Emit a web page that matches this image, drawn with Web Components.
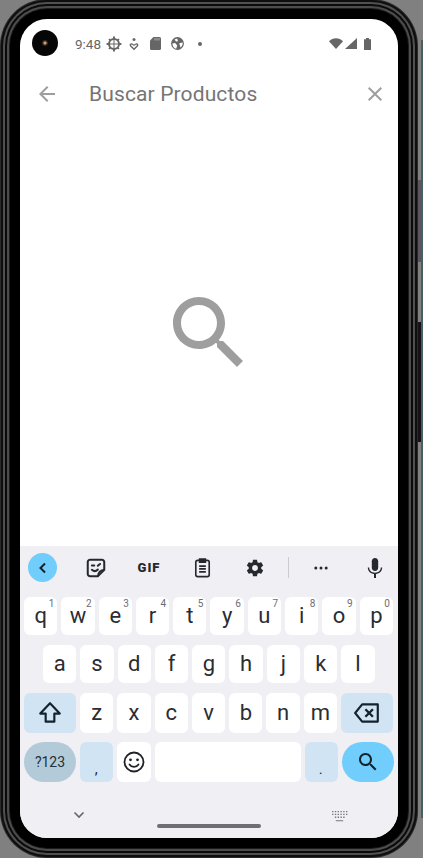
<!DOCTYPE html>
<html lang="es">
<head>
<meta charset="utf-8">
<title>Buscar Productos</title>
<style>
html,body{margin:0;padding:0;background:#808080;}
body{width:423px;height:858px;overflow:hidden;font-family:Roboto,"Liberation Sans",sans-serif;}
</style>
</head>
<body>
<device-frame>
  <status-bar></status-bar>
  <app-bar title="Buscar Productos"></app-bar>
  <search-empty></search-empty>
  <g-keyboard></g-keyboard>
</device-frame>
<script>
const tpl = (html) => { const t = document.createElement('template'); t.innerHTML = html; return t; };
class Base extends HTMLElement {
  connectedCallback() {
    if (this.shadowRoot) return;
    this.attachShadow({mode:'open'}).appendChild(this.constructor.template.content.cloneNode(true));
    this.init && this.init();
  }
}
class DeviceFrame extends Base {
  static template = tpl(`<style>
    :host{display:block;width:423px;height:858px;box-sizing:border-box;padding:19px 25px 20px 20px;position:relative;overflow:hidden;}
    .screen{width:378px;height:819px;border-radius:27px;background:#fff;overflow:hidden;display:flex;flex-direction:column;position:relative;}
    .rings{position:absolute;left:20px;top:19px;width:378px;height:819px;border-radius:27px;
      box-shadow:0 0 0 10px #000,0 0 0 11px #1c1c1c,0 0 0 13px #4c4c4c,0 0 0 15px #0a0a0a,0 0 0 17px #505050,0 0 0 19px #0e0e0e,0 0 0 20px #2a2a2a;}
    .btn{position:absolute;width:3px;right:2px;}
    .b1{top:180px;height:82px;background:#5b5560;}
    .b2{top:322px;height:120px;background:#17121a;}
    .edge{position:absolute;right:0;top:40px;bottom:40px;width:2px;background:#46605f;}
    .cam{position:absolute;left:32px;top:30px;width:26px;height:26px;border-radius:50%;background:#060606;display:flex;align-items:center;justify-content:center;}
    .cam i{width:6px;height:6px;border-radius:50%;background:radial-gradient(circle,#c9a878 0 20%,#4a3826 45%,#1a1612 80%);}
  </style>
  <div class="rings"></div><div class="edge"></div><div class="btn b1"></div><div class="btn b2"></div>
  <div class="screen"><slot></slot></div>
  <div class="cam"><i></i></div>`);
}
class StatusBar extends Base {
  static template = tpl(`<style>
    :host{display:flex;align-items:center;height:47px;flex:none;padding:2px 27px 0 55px;box-sizing:border-box;color:#666;font:13.5px Roboto,sans-serif;}
    svg{display:block;fill:#666;flex:none;}
    .time{width:26px;margin-right:5px;white-space:nowrap;}
    .sp{flex:1;}
  </style>
  <span class="time">9:48</span>
  <svg width="16" height="16" viewBox="0 0 16 16" style="margin-right:7px"><circle cx="8" cy="8" r="5" fill="none" stroke="#666" stroke-width="2"/><path d="M4 8h8M8 4v8" stroke="#666" stroke-width="1"/><path d="M7 .6h2v2H7zM7 13.400h2v2H7zM.6 7h2v2h-2zM13.400 7h2v2h-2zM2.400 3.600l1.200-1.200 1.400 1.400-1.200 1.200zM11 3.800l1.400-1.400 1.200 1.200-1.400 1.400zM2.400 12.400l1.400-1.400 1.200 1.200-1.400 1.400zM10.900 12.100l1.200-1.200 1.400 1.400-1.200 1.200z"/></svg>
  <svg width="10" height="14" viewBox="0 0 10 14" style="margin-right:11px"><circle cx="5" cy="2.400" r="1.500"/><path d="M5 13.200 1 9.200C-.2 7.800 1.400 5.600 3.200 6.400L5 7.600l1.800-1.200C8.600 5.600 10.200 7.800 9 9.200ZM5 11.200 7.800 8.400c.4-.6-.2-1-.7-.8L5 9 2.900 7.600c-.5-.2-1.100.2-.7.8Z" fill-rule="evenodd"/></svg>
  <svg width="11" height="13" viewBox="0 0 11 13" style="margin-right:10px"><path d="M3.500 0H9.500A1.500 1.500 0 0 1 11 1.500V11.500A1.500 1.500 0 0 1 9.500 13H1.500A1.500 1.500 0 0 1 0 11.500V3.500Z"/><path d="M5 1v2.500M7 1v2.500M9 1v2.500" stroke="#fff" stroke-width=".5"/></svg>
  <svg width="13" height="13" viewBox="0 0 13 13" style="margin-right:14px"><circle cx="6.500" cy="6.500" r="6.400"/><path d="M6.200 1.500 3.500 2.500 5 4.600l2-.4ZM1.400 6.400l2.800-.4 2 2.500-1 3.200C3 11.300 1.500 9.300 1.400 6.400ZM8.200 6.200l3.500-.6c.2 2-.6 3.800-2.200 5Z" fill="#fff"/></svg>
  <svg width="4" height="4" viewBox="0 0 4 4"><circle cx="2" cy="2" r="2"/></svg>
  <span class="sp"></span>
  <svg width="14" height="11" viewBox="0 0 14 11" style="margin-right:2px"><path d="M0 3.200C3.800-.9 10.200-.9 14 3.200L7 11Z"/></svg>
  <svg width="12" height="11" viewBox="0 0 12 11" style="margin-right:7px"><path d="M12 0v11H0Z"/></svg>
  <svg width="7" height="12" viewBox="0 0 7 12"><path d="M2 0h3v1.200h2V12H0V1.200h2Z"/></svg>`);
}
class AppBar extends Base {
  static template = tpl(`<style>
    :host{display:flex;align-items:center;height:54px;flex:none;box-sizing:border-box;padding:2px 11px 0 15px;color:#757575;}
    svg{display:block;fill:#9e9e9e;flex:none;}
    .t{flex:1;margin-left:30px;font:21px Roboto,sans-serif;letter-spacing:.13px;color:#757575;white-space:nowrap;}
  </style>
  <svg width="24" height="24" viewBox="0 0 24 24"><path d="M20 11H7.830l5.590-5.590L12 4l-8 8 8 8 1.410-1.410L7.830 13H20v-2z"/></svg>
  <span class="t"></span>
  <svg width="24" height="24" viewBox="0 0 24 24"><path d="M19 6.410 17.590 5 12 10.590 6.410 5 5 6.410 10.590 12 5 17.590 6.410 19 12 13.410 17.590 19 19 17.590 13.410 12z"/></svg>`);
  init(){ this.shadowRoot.querySelector('.t').textContent = this.getAttribute('title'); this.removeAttribute('title'); }
}
class SearchEmpty extends Base {
  static template = tpl(`<style>
    :host{display:flex;flex:1;align-items:center;justify-content:center;min-height:0;}
    svg{display:block;fill:#9e9e9e;}
  </style>
  <svg width="96" height="96" viewBox="0 0 24 24"><path d="M15.500 14h-.79l-.28-.27C15.410 12.590 16 11.110 16 9.500 16 5.910 13.090 3 9.500 3S3 5.910 3 9.500 5.910 16 9.500 16c1.610 0 3.090-.59 4.230-1.570l.27.28v.79l5 4.990L20.490 19l-4.990-5zm-6 0C7.010 14 5 11.990 5 9.500S7.010 5 9.500 5 14 7.010 14 9.500 11.990 14 9.500 14z"/></svg>`);
}
class KbKey extends Base {
  static template = tpl(`<style>
    :host{display:flex;align-items:center;justify-content:center;position:relative;flex:none;width:33.3px;height:100%;box-sizing:border-box;padding-bottom:1px;border-radius:6px;background:#fff;color:#2a2d31;font:22px Roboto,sans-serif;line-height:1;}
    :host([wide]){width:52px;}
    :host([fill]){flex:1;width:auto;}
    :host([tone=light]){background:#d1e4f4;}
    :host([tone=mid]){background:#b3cbd8;border-radius:20px / 20px;font-size:14px;color:#22303a;}
    :host([tone=accent]){background:#70cdfc;border-radius:20px / 20px;}
    :host([punct]){font-size:15px;padding:14px 1px 0 0;color:#22303a;}
    sup{position:absolute;top:2px;right:3px;font:10px Roboto,sans-serif;color:#6a6e74;line-height:1;margin:0;}
  </style><slot></slot><sup></sup>`);
  init(){ const h=this.getAttribute('hint'); if(h) this.shadowRoot.querySelector('sup').textContent=h; }
}
const I = {
 sticker:`<svg width="22" height="22" viewBox="0 0 24 24" fill="none" stroke="#25292d" stroke-width="2.200"><path d="M5.500 3h13A2.500 2.500 0 0 1 21 5.500V14l-7 7H5.500A2.500 2.500 0 0 1 3 18.500v-13A2.500 2.500 0 0 1 5.500 3Z"/><path d="M14 21c0-4 3-7 7-7" stroke-width="1.800"/><path d="M7.500 9.200h2.600M14 9.600l2.400-2M7.500 14c2.400 2 4.500 1.800 6.500-.4" stroke-linecap="round"/></svg>`,
 clip:`<svg width="23" height="23" viewBox="0 0 24 24" fill="none" stroke="#25292d" stroke-width="1.700"><rect x="5" y="4.500" width="14" height="17" rx="2"/><path d="M9 3.300h6v3.200H9z" fill="#25292d"/><path d="M8.500 10.500h7M8.500 13.500h7M8.500 16.500h7"/></svg>`,
 gear:`<svg width="20" height="20" viewBox="0 0 24 24" fill="#25292d"><path d="M19.430 12.980c.04-.32.07-.64.07-.98s-.03-.66-.07-.98l2.110-1.650c.19-.15.24-.42.12-.64l-2-3.460c-.12-.22-.39-.3-.61-.22l-2.490 1c-.52-.4-1.080-.73-1.690-.98l-.38-2.650C14.460 2.180 14.250 2 14 2h-4c-.25 0-.46.18-.49.420l-.38 2.650c-.61.25-1.170.59-1.690.98l-2.490-1c-.23-.09-.49 0-.61.220l-2 3.460c-.13.220-.07.490.12.640l2.110 1.650c-.04.320-.07.650-.07.980s.03.660.07.980l-2.110 1.650c-.19.150-.24.420-.12.640l2 3.460c.12.220.39.300.61.220l2.490-1c.52.400 1.080.730 1.690.980l.38 2.650c.03.240.24.420.49.420h4c.25 0 .46-.18.49-.42l.38-2.650c.61-.25 1.170-.59 1.690-.98l2.490 1c.23.090.49 0 .61-.22l2-3.460c.12-.22.07-.49-.12-.64l-2.110-1.650zM12 15.500c-1.930 0-3.500-1.570-3.500-3.500s1.570-3.500 3.500-3.500 3.500 1.570 3.500 3.500-1.570 3.500-3.500 3.500z"/></svg>`,
 dots:`<svg width="24" height="24" viewBox="0 0 24 24" fill="#25292d"><circle cx="6.800" cy="12" r="1.500"/><circle cx="12" cy="12" r="1.500"/><circle cx="17.200" cy="12" r="1.500"/></svg>`,
 mic:`<svg width="24" height="24" viewBox="0 0 24 24" fill="#25292d"><path d="M12 15c1.900 0 3.200-1.500 3.200-3.300V5.300C15.200 3.500 13.900 2 12 2S8.800 3.500 8.800 5.300v6.400C8.800 13.500 10.100 15 12 15z"/><path d="M17.800 11.600c0 3.200-2.500 5.200-5.800 5.200s-5.800-2-5.800-5.200H4.800c0 3.600 2.600 6 6.200 6.500V22h2v-3.900c3.600-.5 6.200-2.900 6.200-6.500z"/></svg>`,
 shift:`<svg width="26" height="26" viewBox="0 0 24 24" fill="none" stroke="#14222c" stroke-width="2" stroke-linejoin="round"><path d="M12 3 3 12.500h5V20h8v-7.500h5Z"/></svg>`,
 back:`<svg width="28" height="24" viewBox="0 0 26 22" fill="none" stroke="#14222c" stroke-width="2" stroke-linejoin="round"><path d="M8.500 3H23v16H8.500L2 11Z"/><path d="M11.500 7.500l7 7M18.500 7.500l-7 7" stroke-width="2.200"/></svg>`,
 emoji:`<svg width="24" height="24" viewBox="0 0 24 24" fill="none" stroke="#1f2227" stroke-width="1.800"><circle cx="12" cy="12" r="9.500"/><circle cx="8.500" cy="9.800" r="1.400" fill="#1f2227" stroke="none"/><circle cx="15.500" cy="9.800" r="1.400" fill="#1f2227" stroke="none"/><path d="M7.500 14.500c2.200 3.200 6.800 3.200 9 0" stroke-linecap="round"/></svg>`,
 search:`<svg width="24" height="24" viewBox="0 0 24 24" fill="#14222c"><path d="M15.500 14h-.79l-.28-.27C15.410 12.590 16 11.110 16 9.500 16 5.910 13.090 3 9.500 3S3 5.910 3 9.500 5.910 16 9.500 16c1.610 0 3.090-.59 4.230-1.570l.27.28v.79l5 4.990L20.490 19l-4.990-5zm-6 0C7.010 14 5 11.990 5 9.500S7.010 5 9.500 5 14 7.010 14 9.500 11.990 14 9.500 14z"/></svg>`
};
class KbToolbar extends Base {
  static template = tpl(`<style>
    :host{display:flex;align-items:center;height:43px;margin-bottom:8px;flex:none;box-sizing:border-box;padding:0 0 0 8px;}
    .c{width:29px;height:29px;border-radius:50%;background:#70cdfc;display:flex;align-items:center;justify-content:center;flex:none;}
    .i{width:24px;height:24px;display:flex;align-items:center;justify-content:center;flex:none;color:#25292d;}
    .g{font:900 13px Roboto,sans-serif;letter-spacing:1px;}
    .d{width:1px;height:21px;background:#c9cbd0;flex:none;margin:0 20px 0 21px;}
    .m29{margin-left:29px}.m27{margin-left:27px}.m30{margin-left:30px}
  </style>
  <div class="c"><svg width="14" height="14" viewBox="0 0 14 14" fill="none" stroke="#14222c" stroke-width="2"><path d="M9 2.500 4.500 7 9 11.500"/></svg></div>
  <div class="i m27">${I.sticker}</div>
  <div class="i m29 g">GIF</div>
  <div class="i m29">${I.clip}</div>
  <div class="i m29">${I.gear}</div>
  <div class="d"></div>
  <div class="i">${I.dots}</div>
  <div class="i m30">${I.mic}</div>`);
}
class KbNav extends Base {
  static template = tpl(`<style>
    :host{display:flex;align-items:flex-start;height:56px;flex:none;position:relative;}
    .ch{position:absolute;left:53px;top:28px;}
    .bar{position:absolute;left:137px;top:42px;width:104px;height:4px;border-radius:2px;background:#6f6f73;}
    .kb{position:absolute;left:311px;top:28px;}
  </style>
  <svg class="ch" width="12" height="10" viewBox="0 0 12 10" fill="none" stroke="#666" stroke-width="1.600"><path d="M1.500 2.500 6 7l4.500-4.500"/></svg>
  <div class="bar"></div>
  <svg class="kb" width="17" height="13" viewBox="0 0 18 14" fill="#777"><path d="M1 1h1.500v1.500H1zM4 1h1.500v1.500H4zM7 1h1.500v1.500H7zM10 1h1.500v1.500H10zM13 1h1.500v1.500H13zM16 1h1.500v1.500H16zM1 4h1.500v1.500H1zM4 4h1.500v1.500H4zM7 4h1.500v1.500H7zM10 4h1.500v1.500H10zM13 4h1.500v1.500H13zM16 4h1.500v1.500H16zM4 7h1.500v1.500H4zM7 7h1.500v1.500H7zM10 7h1.500v1.500H10zM13 7h1.500v1.500H13zM5 11h8v1.200H5z"/></svg>`);
}
class KbRow extends Base {
  static template = tpl(`<style>
    :host{display:flex;gap:4px;flex:none;box-sizing:border-box;padding:0 4px;height:38px;}
    :host([indent]){padding:0 23px;}
    :host([tall]){height:40px;}
  </style><slot></slot>`);
}
class GKeyboard extends Base {
  static template = tpl(`<style>
    :host{display:flex;flex-direction:column;flex:none;height:292px;background:#f0eff4;box-sizing:border-box;}
    .rows{display:flex;flex-direction:column;}
    kb-row+kb-row{margin-top:10px;}
    kb-row.r4{margin-top:9px;}
  </style>
  <kb-toolbar></kb-toolbar>
  <div class="rows">
    <kb-row><kb-key hint="1">q</kb-key><kb-key hint="2">w</kb-key><kb-key hint="3">e</kb-key><kb-key hint="4">r</kb-key><kb-key hint="5">t</kb-key><kb-key hint="6">y</kb-key><kb-key hint="7">u</kb-key><kb-key hint="8">i</kb-key><kb-key hint="9">o</kb-key><kb-key hint="0">p</kb-key></kb-row>
    <kb-row indent><kb-key>a</kb-key><kb-key>s</kb-key><kb-key>d</kb-key><kb-key>f</kb-key><kb-key>g</kb-key><kb-key>h</kb-key><kb-key>j</kb-key><kb-key>k</kb-key><kb-key>l</kb-key></kb-row>
    <kb-row tall><kb-key wide tone="light">${I.shift}</kb-key><kb-key>z</kb-key><kb-key>x</kb-key><kb-key>c</kb-key><kb-key>v</kb-key><kb-key>b</kb-key><kb-key>n</kb-key><kb-key>m</kb-key><kb-key wide tone="light">${I.back}</kb-key></kb-row>
    <kb-row tall class="r4"><kb-key wide tone="mid">?123</kb-key><kb-key tone="light" punct>,</kb-key><kb-key>${I.emoji}</kb-key><kb-key fill></kb-key><kb-key tone="light" punct>.</kb-key><kb-key wide tone="accent">${I.search}</kb-key></kb-row>
  </div>
  <kb-nav></kb-nav>`);
}
customElements.define('device-frame', DeviceFrame);
customElements.define('status-bar', StatusBar);
customElements.define('app-bar', AppBar);
customElements.define('search-empty', SearchEmpty);
customElements.define('kb-key', KbKey);
customElements.define('kb-toolbar', KbToolbar);
customElements.define('kb-nav', KbNav);
customElements.define('kb-row', KbRow);
customElements.define('g-keyboard', GKeyboard);
</script>
</body>
</html>
